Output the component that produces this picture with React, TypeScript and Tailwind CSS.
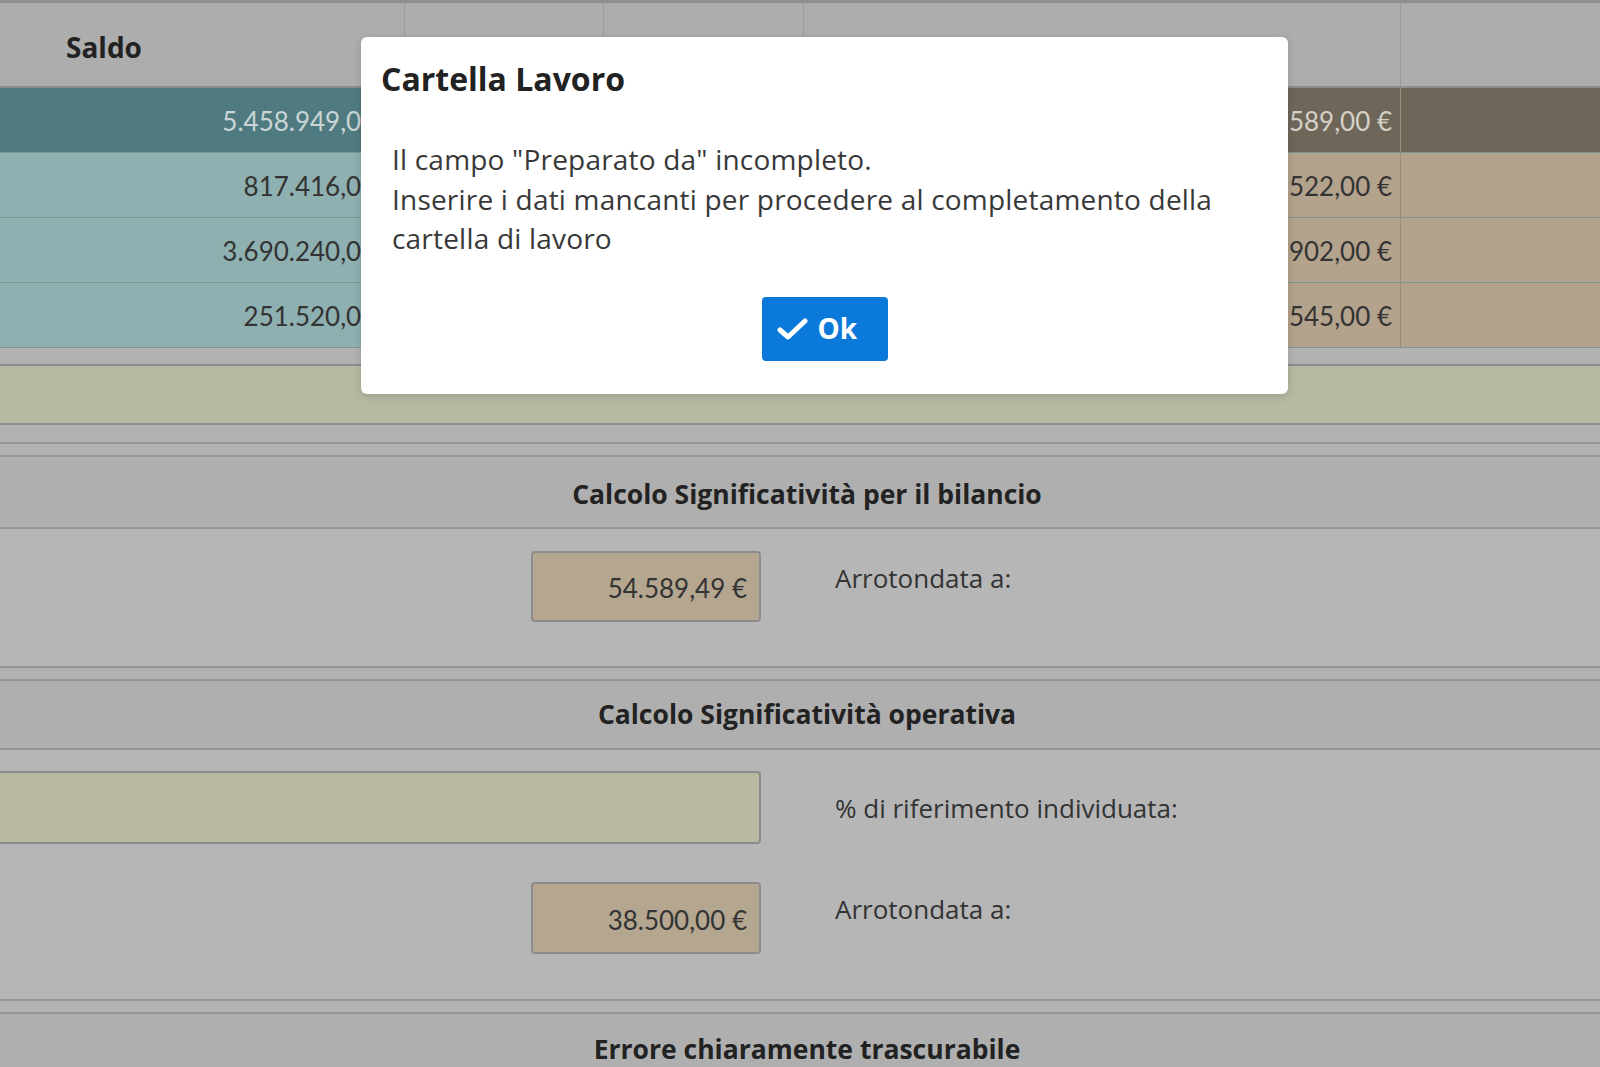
import React from "react";

const rows = [
  { left: "5.458.949,00 €", right: "54.589,00 €", dark: true },
  { left: "817.416,00 €", right: "8.522,00 €", dark: false },
  { left: "3.690.240,00 €", right: "36.902,00 €", dark: false },
  { left: "251.520,00 €", right: "2.545,00 €", dark: false },
];

const NUM = "font-['Lato',sans-serif]";

function Row({ r }: { r: (typeof rows)[number] }) {
  const c1 = r.dark ? "bg-[#4f7b80] text-[#c9d5d6]" : "bg-[#8fb0b1] text-[#333]";
  const c2 = r.dark ? "bg-[#6e6759] text-[#d6d1c8]" : "bg-[#b3a38c] text-[#333]";
  return (
    <div className={`grid grid-cols-[404px_199px_200px_597px_1fr] h-[65px] border-b border-[#7d9596] ${NUM}`}>
      <div className={`${c1} flex items-center justify-end pr-[6px] pt-[3px]`}>{r.left}</div>
      <div className={`${c1} border-l border-[#7f9c9d]`}></div>
      <div className={`${c2} border-l border-[#9a8c78]`}></div>
      <div className={`${c2} border-l border-[#9a8c78] flex items-center justify-end pr-[8px] pt-[3px]`}>{r.right}</div>
      <div className={`${c2} border-l border-[#9a8c78]`}></div>
    </div>
  );
}

function SectionHeader({ title, h }: { title: string; h: string }) {
  return (
    <div className={`${h} bg-[#afafaf] border-b-[2px] border-[#969696] flex items-center justify-center font-bold text-[26.5px] text-[#222] pl-[14px]`}>
      {title}
    </div>
  );
}

function Doubles() {
  return (
    <div className="h-[15px] bg-[#b2b2b2] border-t-[2px] border-b-[2px] border-[#959595]"></div>
  );
}

export default function App() {
  return (
    <div
      className="relative w-[1600px] h-[1067px] overflow-hidden bg-[#b3b3b3] text-[26px] text-[#333]"
      style={{ fontFamily: "'Open Sans', 'Noto Sans', sans-serif" }}
    >
      {/* table header */}
      <div className="grid grid-cols-[404px_199px_200px_597px_1fr] h-[88px] bg-[#adadad] border-t-[3px] border-[#8f8f8f] border-b-[2px] border-b-[#8d8d8d]">
        <div className="flex items-center pl-[66px] pt-[4px] font-bold text-[28px] text-[#222]">Saldo</div>
        <div className="border-l border-[#9a9a9a] flex items-center justify-center font-bold text-[27px] text-[#222] pt-[8px]">Nettato</div>
        <div className="border-l border-[#9a9a9a] flex items-center justify-center font-bold text-[27px] text-[#222] pt-[8px]">Ratei</div>
        <div className="border-l border-[#9a9a9a] flex items-center justify-center font-bold text-[27px] text-[#222] pt-[8px]">Valore</div>
        <div className="border-l border-[#9a9a9a]"></div>
      </div>
      {rows.map((r, i) => (
        <Row key={i} r={r} />
      ))}
      <div className="h-[18px] bg-[#b2b2b2] border-b-[2px] border-[#8c8c8c]"></div>
      <div className="h-[59px] bg-[#b8b9a2] border-b-[2px] border-[#8f8f8f]"></div>
      <div className="h-[19px] bg-[#b2b2b2] border-b-[2px] border-[#969696]"></div>
      <div className="h-[13px] bg-[#b2b2b2] border-b-[2px] border-[#969696]"></div>

      <SectionHeader h="h-[72px] pt-[6px]" title="Calcolo Significatività per il bilancio" />
      <div className="h-[137px] bg-[#b6b6b6] flex pt-[22px]">
        <div className="w-[531px]"></div>
        <div className={`w-[230px] h-[71px] rounded-[4px] border-[2px] border-[#8c8c8c] bg-[#b5a690] flex items-center justify-end pr-[12px] pt-[4px] ${NUM}`}>
          54.589,49 €
        </div>
        <div className="pl-[74px] pt-[8px]">Arrotondata a:</div>
      </div>
      <Doubles />
      <SectionHeader h="h-[69px]" title="Calcolo Significatività operativa" />
      <div className="h-[249px] bg-[#b6b6b6] flex flex-col pt-[21px]">
        <div className="flex">
          <div className="w-[761px] h-[73px] rounded-r-[4px] border-[2px] border-l-0 border-[#8c8c8c] bg-[#b9b9a2]"></div>
          <div className="pl-[74px] pt-[18px]">% di riferimento individuata:</div>
        </div>
        <div className="flex mt-[38px]">
          <div className="w-[531px]"></div>
          <div className={`w-[230px] h-[72px] rounded-[4px] border-[2px] border-[#8c8c8c] bg-[#b5a690] flex items-center justify-end pr-[12px] pt-[4px] ${NUM}`}>
            38.500,00 €
          </div>
          <div className="pl-[74px] pt-[8px]">Arrotondata a:</div>
        </div>
      </div>
      <Doubles />
      <SectionHeader h="h-[74px]" title="Errore chiaramente trascurabile" />

      {/* modal */}
      <div className="absolute left-[361px] top-[37px] w-[927px] h-[357px] bg-white rounded-[6px] shadow-[0_2px_8px_rgba(0,0,0,0.15)]">
        <div className="pl-[20px] pt-[22px] font-bold text-[32px] text-[#222] leading-[40px]">Cartella Lavoro</div>
        <div className="pl-[31px] pt-[41px] text-[28px] tracking-[0.2px] leading-[39.5px] text-[#383838]">
          <div>Il campo "Preparato da" incompleto.</div>
          <div>Inserire i dati mancanti per procedere al completamento della</div>
          <div>cartella di lavoro</div>
        </div>
        <div className="flex justify-center mt-[38px]">
          <div className="w-[126px] h-[64px] rounded-[4px] bg-[#0a79da] flex items-center pl-[15px] gap-[10px] text-white font-bold text-[28px]">
            <svg width="31" height="24" viewBox="0 0 31 24">
              <path d="M3 13 L11 20 L28 4" fill="none" stroke="white" strokeWidth="5" strokeLinecap="round" strokeLinejoin="round" />
            </svg>
            <span className="pb-[2px]">Ok</span>
          </div>
        </div>
      </div>
    </div>
  );
}
